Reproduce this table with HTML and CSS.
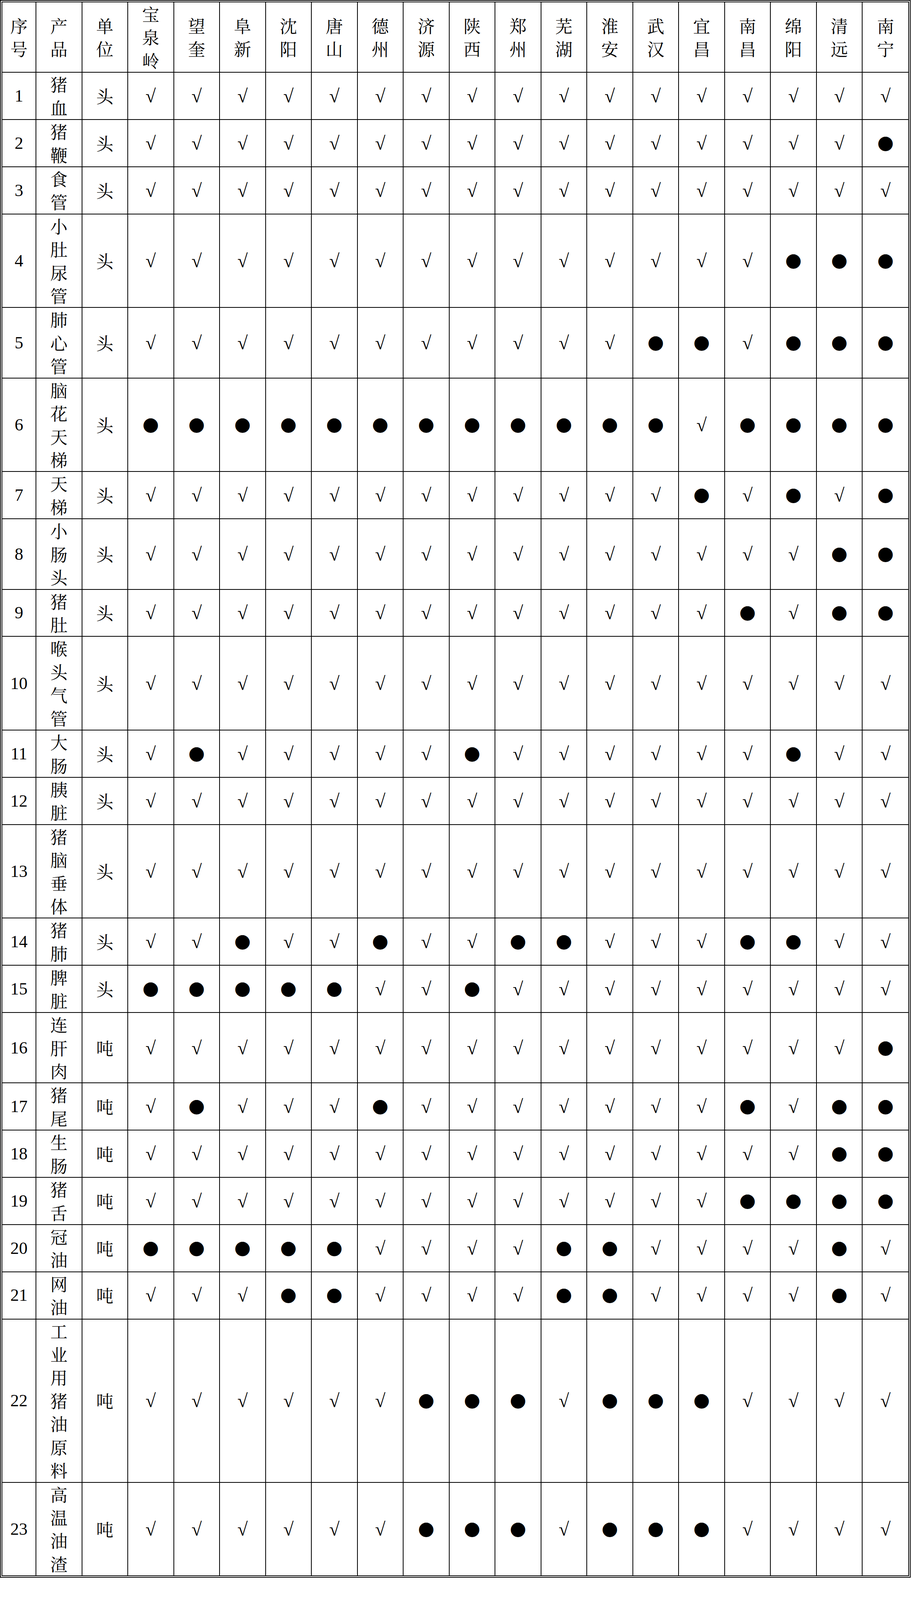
FILE: index.html
```html
<!DOCTYPE html>
<html lang="zh-CN">
<head>
<meta charset="utf-8">
<title>产品一览表</title>
<link rel="stylesheet" href="styles.css">
</head>
<body>
<div class="sheet">
<table class="grid">
<colgroup><col class="col-no"><col span="19"></colgroup>
<tr class="head">
<td><span class="v">序号</span></td><td><span class="v">产品</span></td><td><span class="v">单位</span></td>
<td><span class="v">宝泉岭</span></td><td><span class="v">望奎</span></td><td><span class="v">阜新</span></td><td><span class="v">沈阳</span></td><td><span class="v">唐山</span></td><td><span class="v">德州</span></td><td><span class="v">济源</span></td><td><span class="v">陕西</span></td><td><span class="v">郑州</span></td><td><span class="v">芜湖</span></td><td><span class="v">淮安</span></td><td><span class="v">武汉</span></td><td><span class="v">宜昌</span></td><td><span class="v">南昌</span></td><td><span class="v">绵阳</span></td><td><span class="v">清远</span></td><td><span class="v">南宁</span></td>
</tr>
<tr><td class="n">1</td><td><span class="v">猪血</span></td><td class="u">头</td><td>√</td><td>√</td><td>√</td><td>√</td><td>√</td><td>√</td><td>√</td><td>√</td><td>√</td><td>√</td><td>√</td><td>√</td><td>√</td><td>√</td><td>√</td><td>√</td><td>√</td></tr>
<tr><td class="n">2</td><td><span class="v">猪鞭</span></td><td class="u">头</td><td>√</td><td>√</td><td>√</td><td>√</td><td>√</td><td>√</td><td>√</td><td>√</td><td>√</td><td>√</td><td>√</td><td>√</td><td>√</td><td>√</td><td>√</td><td>√</td><td class="d">●</td></tr>
<tr><td class="n">3</td><td><span class="v">食管</span></td><td class="u">头</td><td>√</td><td>√</td><td>√</td><td>√</td><td>√</td><td>√</td><td>√</td><td>√</td><td>√</td><td>√</td><td>√</td><td>√</td><td>√</td><td>√</td><td>√</td><td>√</td><td>√</td></tr>
<tr><td class="n">4</td><td><span class="v">小肚尿管</span></td><td class="u">头</td><td>√</td><td>√</td><td>√</td><td>√</td><td>√</td><td>√</td><td>√</td><td>√</td><td>√</td><td>√</td><td>√</td><td>√</td><td>√</td><td>√</td><td class="d">●</td><td class="d">●</td><td class="d">●</td></tr>
<tr><td class="n">5</td><td><span class="v">肺心管</span></td><td class="u">头</td><td>√</td><td>√</td><td>√</td><td>√</td><td>√</td><td>√</td><td>√</td><td>√</td><td>√</td><td>√</td><td>√</td><td class="d">●</td><td class="d">●</td><td>√</td><td class="d">●</td><td class="d">●</td><td class="d">●</td></tr>
<tr><td class="n">6</td><td><span class="v">脑花天梯</span></td><td class="u">头</td><td class="d">●</td><td class="d">●</td><td class="d">●</td><td class="d">●</td><td class="d">●</td><td class="d">●</td><td class="d">●</td><td class="d">●</td><td class="d">●</td><td class="d">●</td><td class="d">●</td><td class="d">●</td><td>√</td><td class="d">●</td><td class="d">●</td><td class="d">●</td><td class="d">●</td></tr>
<tr><td class="n">7</td><td><span class="v">天梯</span></td><td class="u">头</td><td>√</td><td>√</td><td>√</td><td>√</td><td>√</td><td>√</td><td>√</td><td>√</td><td>√</td><td>√</td><td>√</td><td>√</td><td class="d">●</td><td>√</td><td class="d">●</td><td>√</td><td class="d">●</td></tr>
<tr><td class="n">8</td><td><span class="v">小肠头</span></td><td class="u">头</td><td>√</td><td>√</td><td>√</td><td>√</td><td>√</td><td>√</td><td>√</td><td>√</td><td>√</td><td>√</td><td>√</td><td>√</td><td>√</td><td>√</td><td>√</td><td class="d">●</td><td class="d">●</td></tr>
<tr><td class="n">9</td><td><span class="v">猪肚</span></td><td class="u">头</td><td>√</td><td>√</td><td>√</td><td>√</td><td>√</td><td>√</td><td>√</td><td>√</td><td>√</td><td>√</td><td>√</td><td>√</td><td>√</td><td class="d">●</td><td>√</td><td class="d">●</td><td class="d">●</td></tr>
<tr><td class="n">10</td><td><span class="v">喉头气管</span></td><td class="u">头</td><td>√</td><td>√</td><td>√</td><td>√</td><td>√</td><td>√</td><td>√</td><td>√</td><td>√</td><td>√</td><td>√</td><td>√</td><td>√</td><td>√</td><td>√</td><td>√</td><td>√</td></tr>
<tr><td class="n">11</td><td><span class="v">大肠</span></td><td class="u">头</td><td>√</td><td class="d">●</td><td>√</td><td>√</td><td>√</td><td>√</td><td>√</td><td class="d">●</td><td>√</td><td>√</td><td>√</td><td>√</td><td>√</td><td>√</td><td class="d">●</td><td>√</td><td>√</td></tr>
<tr><td class="n">12</td><td><span class="v">胰脏</span></td><td class="u">头</td><td>√</td><td>√</td><td>√</td><td>√</td><td>√</td><td>√</td><td>√</td><td>√</td><td>√</td><td>√</td><td>√</td><td>√</td><td>√</td><td>√</td><td>√</td><td>√</td><td>√</td></tr>
<tr><td class="n">13</td><td><span class="v">猪脑垂体</span></td><td class="u">头</td><td>√</td><td>√</td><td>√</td><td>√</td><td>√</td><td>√</td><td>√</td><td>√</td><td>√</td><td>√</td><td>√</td><td>√</td><td>√</td><td>√</td><td>√</td><td>√</td><td>√</td></tr>
<tr><td class="n">14</td><td><span class="v">猪肺</span></td><td class="u">头</td><td>√</td><td>√</td><td class="d">●</td><td>√</td><td>√</td><td class="d">●</td><td>√</td><td>√</td><td class="d">●</td><td class="d">●</td><td>√</td><td>√</td><td>√</td><td class="d">●</td><td class="d">●</td><td>√</td><td>√</td></tr>
<tr><td class="n">15</td><td><span class="v">脾脏</span></td><td class="u">头</td><td class="d">●</td><td class="d">●</td><td class="d">●</td><td class="d">●</td><td class="d">●</td><td>√</td><td>√</td><td class="d">●</td><td>√</td><td>√</td><td>√</td><td>√</td><td>√</td><td>√</td><td>√</td><td>√</td><td>√</td></tr>
<tr><td class="n">16</td><td><span class="v">连肝肉</span></td><td class="u">吨</td><td>√</td><td>√</td><td>√</td><td>√</td><td>√</td><td>√</td><td>√</td><td>√</td><td>√</td><td>√</td><td>√</td><td>√</td><td>√</td><td>√</td><td>√</td><td>√</td><td class="d">●</td></tr>
<tr><td class="n">17</td><td><span class="v">猪尾</span></td><td class="u">吨</td><td>√</td><td class="d">●</td><td>√</td><td>√</td><td>√</td><td class="d">●</td><td>√</td><td>√</td><td>√</td><td>√</td><td>√</td><td>√</td><td>√</td><td class="d">●</td><td>√</td><td class="d">●</td><td class="d">●</td></tr>
<tr><td class="n">18</td><td><span class="v">生肠</span></td><td class="u">吨</td><td>√</td><td>√</td><td>√</td><td>√</td><td>√</td><td>√</td><td>√</td><td>√</td><td>√</td><td>√</td><td>√</td><td>√</td><td>√</td><td>√</td><td>√</td><td class="d">●</td><td class="d">●</td></tr>
<tr><td class="n">19</td><td><span class="v">猪舌</span></td><td class="u">吨</td><td>√</td><td>√</td><td>√</td><td>√</td><td>√</td><td>√</td><td>√</td><td>√</td><td>√</td><td>√</td><td>√</td><td>√</td><td>√</td><td class="d">●</td><td class="d">●</td><td class="d">●</td><td class="d">●</td></tr>
<tr><td class="n">20</td><td><span class="v">冠油</span></td><td class="u">吨</td><td class="d">●</td><td class="d">●</td><td class="d">●</td><td class="d">●</td><td class="d">●</td><td>√</td><td>√</td><td>√</td><td>√</td><td class="d">●</td><td class="d">●</td><td>√</td><td>√</td><td>√</td><td>√</td><td class="d">●</td><td>√</td></tr>
<tr><td class="n">21</td><td><span class="v">网油</span></td><td class="u">吨</td><td>√</td><td>√</td><td>√</td><td class="d">●</td><td class="d">●</td><td>√</td><td>√</td><td>√</td><td>√</td><td class="d">●</td><td class="d">●</td><td>√</td><td>√</td><td>√</td><td>√</td><td class="d">●</td><td>√</td></tr>
<tr><td class="n">22</td><td><span class="v">工业用猪油原料</span></td><td class="u">吨</td><td>√</td><td>√</td><td>√</td><td>√</td><td>√</td><td>√</td><td class="d">●</td><td class="d">●</td><td class="d">●</td><td>√</td><td class="d">●</td><td class="d">●</td><td class="d">●</td><td>√</td><td>√</td><td>√</td><td>√</td></tr>
<tr><td class="n">23</td><td><span class="v">高温油渣</span></td><td class="u">吨</td><td>√</td><td>√</td><td>√</td><td>√</td><td>√</td><td>√</td><td class="d">●</td><td class="d">●</td><td class="d">●</td><td>√</td><td class="d">●</td><td class="d">●</td><td class="d">●</td><td>√</td><td>√</td><td>√</td><td>√</td></tr>
</table>
</div>
</body>
</html>
```

FILE: styles.css
```css
html, body {
  margin: 0;
  padding: 0;
  background: #ffffff;
}

.sheet {
  width: 2331px;
  box-sizing: border-box;
  border: 6px double #000000;
}

.grid {
  width: 100%;
  table-layout: fixed;
  border-collapse: collapse;
  font-family: "Liberation Serif", serif;
  font-size: 48px;
  line-height: 1.4509vh;
  color: #000000;
}

.col-no {
  width: 86px;
}

.grid td {
  border: 2px solid #000000;
  padding: 0;
  text-align: center;
  vertical-align: middle;
}

.grid tr:first-child td {
  border-top: none;
}

.grid tr:last-child td {
  border-bottom: none;
}

.grid td:first-child {
  border-left: none;
}

.grid td:last-child {
  border-right: none;
}

.v {
  display: block;
  width: 1em;
  margin: 0 auto;
  font-family: "Noto Serif CJK SC", "Noto Sans CJK SC", serif;
  font-size: 44px;
  line-height: 1.4509vh;
}

.u {
  font-family: "Noto Serif CJK SC", "Noto Sans CJK SC", serif;
  font-size: 44px;
}

.n {
  font-family: "Liberation Serif", serif;
  font-size: 44px;
}

.d {
  font-family: "Noto Sans CJK SC", sans-serif;
  font-size: 41px;
}
```
